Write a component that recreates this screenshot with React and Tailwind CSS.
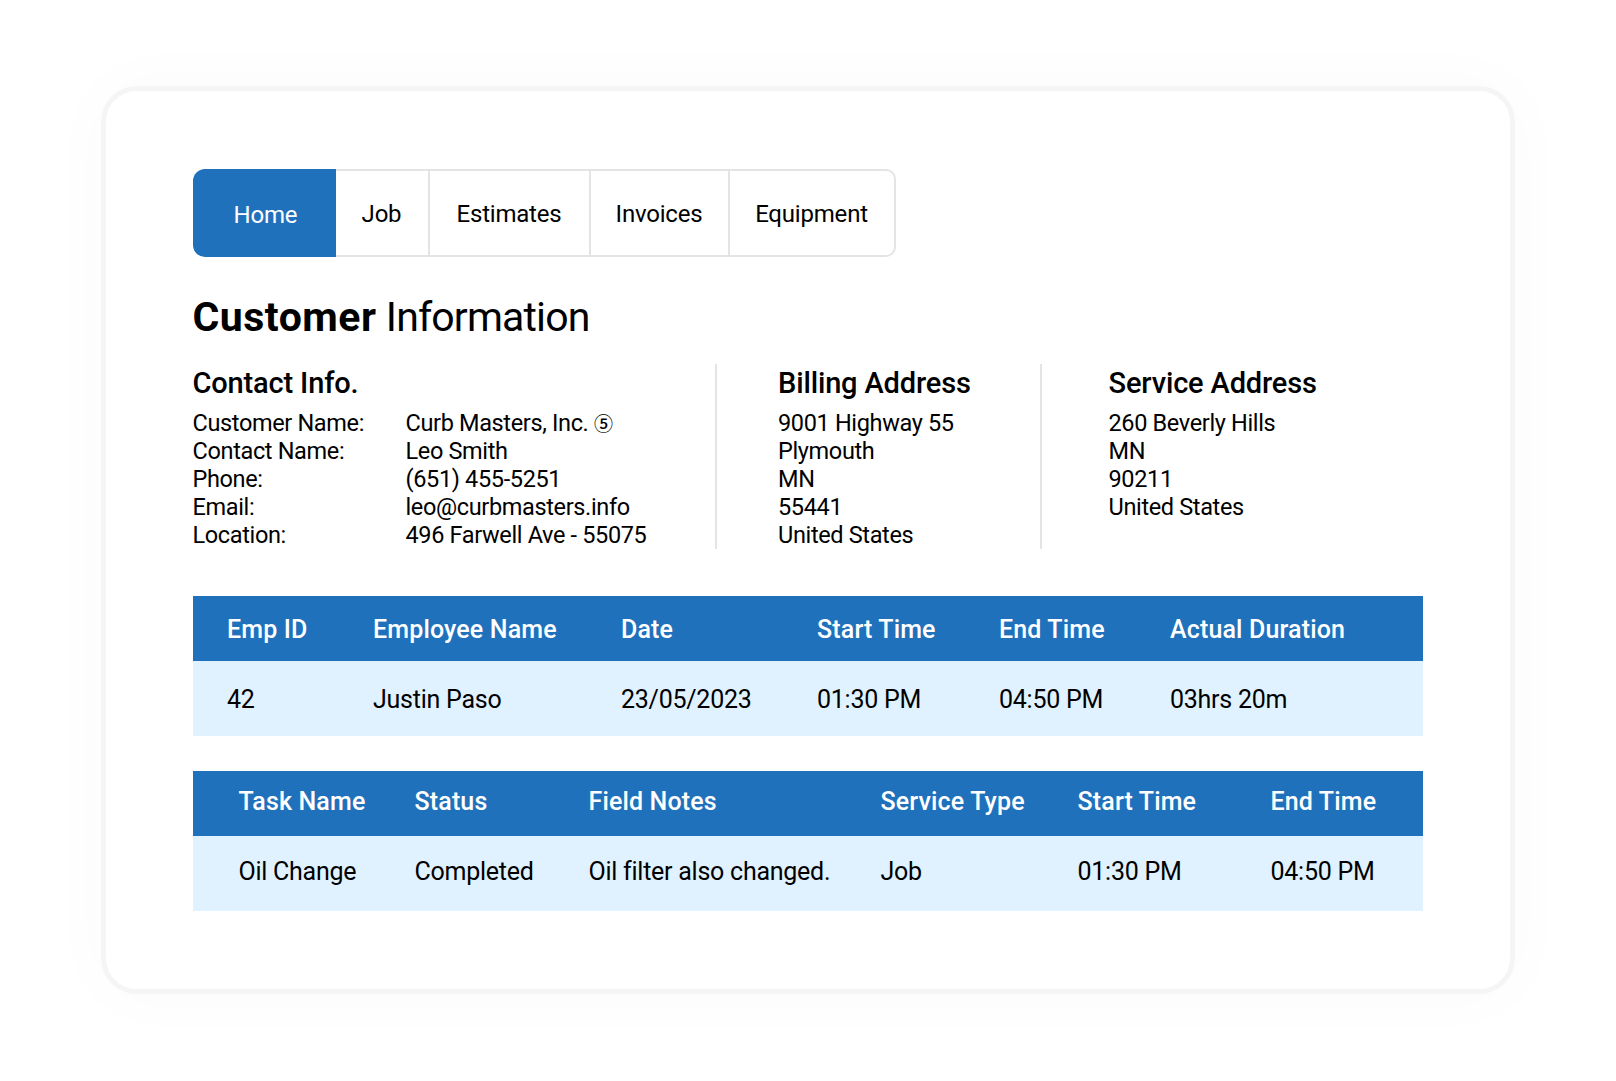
const font = { fontFamily: "Roboto, 'Noto Sans CJK SC', sans-serif" };

const tabs = [
  ["Job", "w-[94px]"],
  ["Estimates", "w-[161px]"],
  ["Invoices", "w-[139px]"],
];

function Tabs() {
  return (
    <div className="flex h-[88px] w-[703px] text-[24px] tracking-[-0.2px]">
      <div className="flex w-[143px] items-center justify-center rounded-l-[12px] bg-[#2071bc] pl-[3px] pt-[3px] text-white">
        Home
      </div>
      <div className="flex flex-1 rounded-r-[10px] border-y-2 border-r-2 border-[#e4e4e4] text-black">
        {tabs.map(([t, w]) => (
          <div key={t} className={`flex items-center justify-center border-r-2 border-[#e4e4e4] pt-[1px] ${w}`}>
            {t}
          </div>
        ))}
        <div className="flex flex-1 items-center justify-center pt-[1px]">Equipment</div>
      </div>
    </div>
  );
}

function SectionTitle({ children }) {
  return <h3 className="pt-[1px] text-[29px] font-medium leading-[36px] tracking-[-0.15px] text-black">{children}</h3>;
}

function Address({ title, lines, className }) {
  return (
    <div className={className}>
      <SectionTitle>{title}</SectionTitle>
      <div className="mt-[8px] text-[23.5px] leading-[28px] tracking-[-0.35px] text-black">
        {lines.map((l) => (
          <div key={l}>{l}</div>
        ))}
      </div>
    </div>
  );
}

function Table({ cols, padding, head, row, className, headClass, rowClass }) {
  return (
    <div className={className}>
      <div className={`grid ${cols} ${padding} ${headClass} h-[65px] items-center bg-[#2071bc] text-[25px] font-medium tracking-[0.15px] text-white`}>
        {head.map((h) => (
          <div key={h} className="whitespace-nowrap">{h}</div>
        ))}
      </div>
      <div className={`grid ${cols} ${padding} ${rowClass} h-[75px] items-center bg-[#e0f1ff] text-[25px] tracking-[-0.25px] text-black`}>
        {row.map((c) => (
          <div key={c} className="whitespace-nowrap">{c}</div>
        ))}
      </div>
    </div>
  );
}

const contact = [
  ["Customer Name:", <>Curb Masters, Inc. <span className="text-[19px] font-medium">⑤</span></>],
  ["Contact Name:", "Leo Smith"],
  ["Phone:", "(651) 455-5251"],
  ["Email:", "leo@curbmasters.info"],
  ["Location:", "496 Farwell Ave - 55075"],
];

export default function App() {
  return (
    <div style={font} className="relative h-[1081px] w-[1616px] overflow-hidden bg-white pl-[101px] pt-[86px]">
      <div className="h-[908px] w-[1414px] rounded-[36px] border-[5px] border-[#f5f5f5] bg-white pl-[86.5px] pt-[78px] shadow-[0_0_70px_rgba(0,0,0,0.025)]">
        <Tabs />
        <h1 className="mt-[34px] text-[41px] leading-[52px] tracking-[-0.85px] text-black">
          <span className="font-bold tracking-[0.5px]">Customer</span> Information
        </h1>
        <div className="mt-[21px] flex h-[185px] w-[1232px]">
          <div className="w-[524px] border-r-2 border-[#e4e4e4]">
            <SectionTitle>Contact Info.</SectionTitle>
            <div className="mt-[8px] text-[23.5px] leading-[28px] tracking-[-0.35px] text-black">
              {contact.map(([a, b]) => (
                <div key={a} className="grid h-[28px] grid-cols-[213px_1fr]">
                  <div>{a}</div>
                  <div>{b}</div>
                </div>
              ))}
            </div>
          </div>
          <Address
            className="w-[325px] border-r-2 border-[#e4e4e4] pl-[61.5px]"
            title="Billing Address"
            lines={["9001 Highway 55", "Plymouth", "MN", "55441", "United States"]}
          />
          <Address
            className="pl-[67px]"
            title="Service Address"
            lines={["260 Beverly Hills", "MN", "90211", "United States"]}
          />
        </div>
        <Table
          className="mt-[47px] w-[1230.5px]"
          cols="grid-cols-[146px_248px_196px_182px_171px_1fr]"
          padding="pl-[34.5px]"
          headClass="pt-[2px]"
          rowClass="pt-[2px]"
          head={["Emp ID", "Employee Name", "Date", "Start Time", "End Time", "Actual Duration"]}
          row={["42", "Justin Paso", "23/05/2023", "01:30 PM", "04:50 PM", "03hrs 20m"]}
        />
        <Table
          className="mt-[35px] w-[1230.5px]"
          cols="grid-cols-[176px_174px_292px_197px_193px_1fr]"
          padding="pl-[46px]"
          headClass="pb-[4px]"
          rowClass="pb-[4px]"
          head={["Task Name", "Status", "Field Notes", "Service Type", "Start Time", "End Time"]}
          row={["Oil Change", "Completed", "Oil filter also changed.", "Job", "01:30 PM", "04:50 PM"]}
        />
      </div>
    </div>
  );
}
